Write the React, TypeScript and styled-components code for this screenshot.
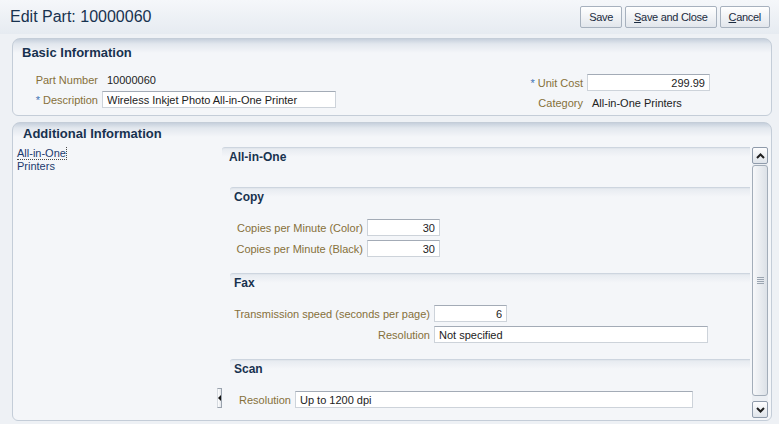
import React from "react";
import styled, { createGlobalStyle } from "styled-components";

const GlobalStyle = createGlobalStyle`
  html, body {
    margin: 0;
    padding: 0;
  }
  body {
    font-family: "Liberation Sans", Arial, sans-serif;
    background: #eef1f5;
  }
`;

const Page = styled.div`
  width: 779px;
  height: 424px;
  overflow: hidden;
  display: flex;
  flex-direction: column;
  background: #eef1f5;
`;

const TitleBar = styled.header`
  height: 34px;
  flex: none;
  display: flex;
  align-items: center;
  justify-content: space-between;
  padding: 0 9px 0 10px;
  background: linear-gradient(#f5f7fa, #e6ebf1);
`;

const Title = styled.h1`
  margin: 0;
  font-size: 16px;
  font-weight: normal;
  color: #18324f;
`;

const ButtonGroup = styled.div`
  display: flex;
  gap: 3px;
`;

const ToolButton = styled.button`
  height: 22px;
  padding: 0 8px;
  font-family: "Liberation Sans", Arial, sans-serif;
  font-size: 11px;
  letter-spacing: -0.3px;
  color: #1b2b40;
  background: linear-gradient(#ffffff, #e2e6ec);
  border: 1px solid #a7b1be;
  border-radius: 2px;
`;

const Mnemonic = styled.span`
  text-decoration: underline;
`;

const Body = styled.main`
  flex: 1;
  display: flex;
  flex-direction: column;
  gap: 6px;
  padding: 4px 7px 0 12px;
`;

const Panel = styled.section<{ $height: number }>`
  height: ${(p) => p.$height}px;
  flex: none;
  box-sizing: border-box;
  display: flex;
  flex-direction: column;
  border: 1px solid #c4cdd8;
  border-radius: 8px 8px 6px 6px;
  background: linear-gradient(to bottom, #c6d0dc 0px, #e2e7ee 5px, #f4f6f9 14px);
`;

const PanelTitle = styled.h2<{ $h: number; $top: number; $left: number }>`
  margin: 0;
  flex: none;
  height: ${(p) => p.$h}px;
  box-sizing: border-box;
  padding: ${(p) => p.$top}px 0 0 ${(p) => p.$left}px;
  font-size: 13px;
  line-height: 16px;
  font-weight: bold;
  color: #18324f;
`;

const BasicBody = styled.div`
  display: flex;
  justify-content: space-between;
  align-items: flex-start;
  padding: 10px 61px 0 9px;
`;

const FormGrid = styled.div<{ $labelWidth: number; $rowGap?: number; $top?: number }>`
  display: grid;
  grid-template-columns: ${(p) => p.$labelWidth}px max-content;
  grid-auto-rows: 17px;
  column-gap: 4px;
  row-gap: ${(p) => p.$rowGap ?? 4}px;
  align-items: center;
  margin-top: ${(p) => p.$top ?? 0}px;
`;

const Label = styled.label`
  justify-self: end;
  white-space: nowrap;
  font-size: 11px;
  color: #86703a;
`;

const Required = styled.span`
  color: #4173b4;
  margin-right: 3px;
`;

const ReadOnly = styled.span`
  padding-left: 5px;
  font-size: 11px;
  color: #222;
  white-space: nowrap;
`;

const Field = styled.input<{ $w: number; $align?: string }>`
  box-sizing: border-box;
  width: ${(p) => p.$w}px;
  height: 17px;
  margin: 0;
  padding: 0 4px;
  font-family: "Liberation Sans", Arial, sans-serif;
  font-size: 11px;
  color: #222;
  text-align: ${(p) => p.$align ?? "left"};
  background: #fff;
  border: 1px solid #cdd3da;
  border-top-color: #a3abb6;
  outline: none;
`;

const Split = styled.div`
  flex: 1;
  display: flex;
  padding: 0 3px 2px 0;
  min-height: 0;
`;

const LeftPane = styled.nav`
  width: 201px;
  padding-left: 4px;
  font-size: 11px;
  line-height: 13px;
  color: #1c3a6e;
`;

const TreeItem = styled.span`
  border: 1px dotted #4a4a4a;
  border-left: none;
  border-top: none;
`;

const Splitter = styled.div`
  width: 4px;
  display: flex;
  flex-direction: column;
  justify-content: flex-end;
  padding-bottom: 10px;
`;

const SplitterHandle = styled.div`
  width: 5px;
  height: 20px;
  margin-left: -1px;
  box-sizing: border-box;
  border: 1px solid #9aa3ae;
  border-left-color: #d5dae0;
  background: linear-gradient(to right, #ffffff, #e1e5ea);
  display: flex;
  align-items: center;
  justify-content: center;

  &::after {
    content: "";
    border-style: solid;
    border-width: 3px 3px 3px 0;
    border-color: transparent #111 transparent transparent;
  }
`;

const RightPane = styled.div`
  flex: 1;
  display: flex;
  gap: 2px;
`;

const ScrollContent = styled.div`
  flex: 1;
  overflow: hidden;
`;

const SectionHeader = styled.div<{ $pad: number }>`
  height: 22px;
  box-sizing: border-box;
  padding-left: ${(p) => p.$pad}px;
  line-height: 19px;
  font-size: 12px;
  font-weight: bold;
  color: #18324f;
  border-top: 1px solid #cdd5df;
  border-top-left-radius: 3px;
  box-shadow: inset 0 1px 0 #e1e6ec;
  background: linear-gradient(#e6eaf0, #f4f6f9 9px);
`;

const SectionBody = styled.div`
  padding: 18px 0 0 8px;
`;

const SubBody = styled.div`
  padding: 10px 0 16px 11px;
`;

const Scrollbar = styled.div`
  width: 16px;
  display: flex;
  flex-direction: column;
`;

const ScrollButton = styled.div`
  height: 17px;
  flex: none;
  box-sizing: border-box;
  border: 1px solid #8f9bab;
  border-radius: 2px;
  background: linear-gradient(#fdfdfe, #dfe4ea);
  display: flex;
  align-items: center;
  justify-content: center;
`;

const ScrollTrack = styled.div`
  flex: 1;
  padding: 1px 0 5px;
  background: #eceff3;
`;

const ScrollThumb = styled.div`
  height: 100%;
  box-sizing: border-box;
  border: 1px solid #a3adb9;
  border-radius: 3px;
  background: linear-gradient(to right, #f7f8fa, #dce1e7);
  display: flex;
  align-items: center;
  justify-content: center;
`;

const Gripper = styled.div`
  width: 7px;
  height: 7px;
  background: repeating-linear-gradient(#9aa4b0 0 1px, transparent 1px 2px);
`;

const Chevron = ({ up }: { up?: boolean }) => (
  <svg width="9" height="6" viewBox="0 0 9 6">
    <polyline
      points={up ? "1,5 4.5,1.5 8,5" : "1,1 4.5,4.5 8,1"}
      fill="none"
      stroke="#1f1f1f"
      strokeWidth="2"
    />
  </svg>
);

export default function App() {
  return (
    <Page>
      <GlobalStyle />
      <TitleBar>
        <Title>Edit Part: 10000060</Title>
        <ButtonGroup>
          <ToolButton>Save</ToolButton>
          <ToolButton>
            <Mnemonic>S</Mnemonic>ave and Close
          </ToolButton>
          <ToolButton>
            <Mnemonic>C</Mnemonic>ancel
          </ToolButton>
        </ButtonGroup>
      </TitleBar>

      <Body>
        <Panel $height={78}>
          <PanelTitle $h={22} $top={6} $left={9}>
            Basic Information
          </PanelTitle>
          <BasicBody>
            <FormGrid $labelWidth={76} $rowGap={3}>
              <Label>Part Number</Label>
              <ReadOnly>10000060</ReadOnly>
              <Label>
                <Required>*</Required>Description
              </Label>
              <Field $w={234} defaultValue="Wireless Inkjet Photo All-in-One Printer" readOnly />
            </FormGrid>
            <FormGrid $labelWidth={56} $rowGap={3} $top={3}>
              <Label>
                <Required>*</Required>Unit Cost
              </Label>
              <Field $w={123} $align="right" defaultValue="299.99" readOnly />
              <Label>Category</Label>
              <ReadOnly>All-in-One Printers</ReadOnly>
            </FormGrid>
          </BasicBody>
        </Panel>

        <Panel $height={299}>
          <PanelTitle $h={24} $top={3} $left={10}>
            Additional Information
          </PanelTitle>
          <Split>
            <LeftPane>
              <TreeItem>All-in-One</TreeItem>
              <br />
              Printers
            </LeftPane>
            <Splitter>
              <SplitterHandle />
            </Splitter>
            <RightPane>
              <ScrollContent>
                <SectionHeader $pad={7}>All-in-One</SectionHeader>
                <SectionBody>
                  <SectionHeader $pad={4}>Copy</SectionHeader>
                  <SubBody>
                    <FormGrid $labelWidth={122}>
                      <Label>Copies per Minute (Color)</Label>
                      <Field $w={73} $align="right" defaultValue="30" readOnly />
                      <Label>Copies per Minute (Black)</Label>
                      <Field $w={73} $align="right" defaultValue="30" readOnly />
                    </FormGrid>
                  </SubBody>

                  <SectionHeader $pad={4}>Fax</SectionHeader>
                  <SubBody>
                    <FormGrid $labelWidth={189}>
                      <Label>Transmission speed (seconds per page)</Label>
                      <Field $w={73} $align="right" defaultValue="6" readOnly />
                      <Label>Resolution</Label>
                      <Field $w={274} defaultValue="Not specified" readOnly />
                    </FormGrid>
                  </SubBody>

                  <SectionHeader $pad={4}>Scan</SectionHeader>
                  <SubBody>
                    <FormGrid $labelWidth={50}>
                      <Label>Resolution</Label>
                      <Field $w={398} defaultValue="Up to 1200 dpi" readOnly />
                    </FormGrid>
                  </SubBody>
                </SectionBody>
              </ScrollContent>
              <Scrollbar>
                <ScrollButton>
                  <Chevron up />
                </ScrollButton>
                <ScrollTrack>
                  <ScrollThumb>
                    <Gripper />
                  </ScrollThumb>
                </ScrollTrack>
                <ScrollButton>
                  <Chevron />
                </ScrollButton>
              </Scrollbar>
            </RightPane>
          </Split>
        </Panel>
      </Body>
    </Page>
  );
}
